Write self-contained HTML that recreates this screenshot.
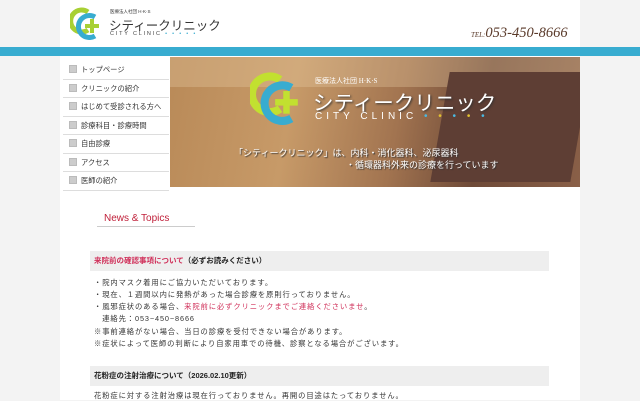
<!DOCTYPE html>
<html><head><meta charset="utf-8"><style>
*{margin:0;padding:0;box-sizing:border-box}
body{width:640px;height:400px;overflow:hidden;background:#f3f3f3;font-family:"Liberation Sans","Noto Sans CJK JP",sans-serif;position:relative}
.wrap{position:absolute;left:60px;top:0;width:520px;height:400px;background:#fff}
.band{position:absolute;left:0;top:47px;width:640px;height:9px;background:#38acd0}
.abs{position:absolute;white-space:nowrap}
.nav{position:absolute;left:63px;top:61px;width:106px}
.nav div{height:18.5px;border-bottom:1px solid #ddd;font-size:7.3px;color:#333;line-height:18px;padding-left:6px}
.nav div:before{content:"";display:inline-block;width:6px;height:6px;background:#ccc;border:1px solid #bbb;margin-right:4px;vertical-align:-1px}
.hero{position:absolute;left:170px;top:57px;width:410px;height:130px;background:linear-gradient(100deg,#b98a58 0%,#c79a68 30%,#a27450 55%,#6e4a38 75%,#8a6048 100%);overflow:hidden}
.box{position:absolute;left:90px;width:459px;height:20px;background:#eeeeee;font-size:7.5px;font-weight:bold;line-height:20px;padding-left:4px;color:#222}
.t{position:absolute;left:94px;font-size:7.3px;color:#333;letter-spacing:0.9px;white-space:nowrap}
.r{color:#d0305a}
</style></head><body>
<div class="wrap"></div>
<div class="band"></div>
<svg class="abs" style="left:70px;top:6px" width="36" height="34" viewBox="0 0 36 34">
<path d="M18 6 A11 11 0 1 0 18 24" stroke="#a8d034" stroke-width="5" fill="none"/>
<path d="M25 11 A11 11 0 1 0 25 30" stroke="#38acd0" stroke-width="5" fill="none"/>
<rect x="20" y="13" width="4" height="14" fill="#a8d034"/><rect x="15" y="18" width="14" height="4" fill="#a8d034"/>
</svg>
<div class="abs" style="left:110px;top:9px;font-size:4.5px;color:#333">医療法人社団 H·K·S</div>
<div class="abs" style="left:109px;top:15px;font-size:12.5px;color:#333">シティークリニック</div>
<div class="abs" style="left:110px;top:31px;font-size:5.5px;letter-spacing:1.8px;color:#444">CITY CLINIC <span style="color:#38acd0">• • • • •</span></div>
<div class="abs" style="left:471px;top:25px;font-family:'Liberation Serif',serif;font-style:italic;font-size:14.5px;color:#5a3a2a"><span style="font-size:7px">TEL:</span>053-450-8666</div>
<div class="nav"><div>トップページ</div><div>クリニックの紹介</div><div>はじめて受診される方へ</div><div>診療科目・診療時間</div><div>自由診療</div><div>アクセス</div><div>医師の紹介</div></div>
<div class="hero">
<div style="position:absolute;left:0;top:0;width:410px;height:30px;background:rgba(230,200,160,.35)"></div>
<div style="position:absolute;left:270px;top:15px;width:140px;height:110px;background:#5e3e34;transform:skewX(-10deg)"></div>
<svg style="position:absolute;left:80px;top:13px" width="60" height="55" viewBox="0 0 36 34">
<path d="M18 6 A11 11 0 1 0 18 24" stroke="#c2e030" stroke-width="5" fill="none"/>
<path d="M25 11 A11 11 0 1 0 25 30" stroke="#38acd0" stroke-width="5" fill="none"/>
<rect x="20" y="13" width="4" height="14" fill="#c2e030"/><rect x="15" y="18" width="14" height="4" fill="#c2e030"/>
</svg>
<div class="abs" style="left:145px;top:19px;font-size:7px;color:#fff;font-family:'Liberation Serif',serif">医療法人社団 H·K·S</div>
<div class="abs" style="left:143px;top:29px;font-size:20.5px;color:#fff;text-shadow:1px 1px 2px #333">シティークリニック</div>
<div class="abs" style="left:145px;top:54px;font-size:10px;letter-spacing:4px;color:#fff">CITY CLINIC <span style="color:#4ab8e0">•</span> <span style="color:#e0c030">•</span> <span style="color:#4ab8e0">•</span> <span style="color:#e0c030">•</span> <span style="color:#4ab8e0">•</span></div>
<div class="abs" style="left:64px;top:89px;font-size:9px;color:#fff;text-shadow:1px 1px 1px #333">「シティークリニック」は、内科・消化器科、泌尿器科</div>
<div class="abs" style="left:176px;top:101px;font-size:9px;color:#fff;text-shadow:1px 1px 1px #333">・循環器科外来の診療を行っています</div>
</div>
<div class="abs" style="left:104px;top:213px;font-size:10px;color:#c0203a">News &amp; Topics</div>
<div class="abs" style="left:97px;top:226px;width:98px;height:1px;background:#ccc"></div>
<div class="box" style="top:251px"><span class="r">来院前の確認事項について</span>（必ずお読みください）</div>
<div class="t" style="top:278px">・院内マスク着用にご協力いただいております。</div>
<div class="t" style="top:290px">・現在、１週間以内に発熱があった場合診療を原則行っておりません。</div>
<div class="t" style="top:302px">・風邪症状のある場合、<span class="r">来院前に必ずクリニックまでご連絡くださいませ</span>。</div>
<div class="t" style="top:314px">　連絡先：053−450−8666</div>
<div class="t" style="top:327px">※事前連絡がない場合、当日の診療を受付できない場合があります。</div>
<div class="t" style="top:339px">※症状によって医師の判断により自家用車での待機、診察となる場合がございます。</div>
<div class="box" style="top:366px">花粉症の注射治療について（2026.02.10更新）</div>
<div class="t" style="top:391px">花粉症に対する注射治療は現在行っておりません。再開の目途はたっておりません。</div>
</body></html>
